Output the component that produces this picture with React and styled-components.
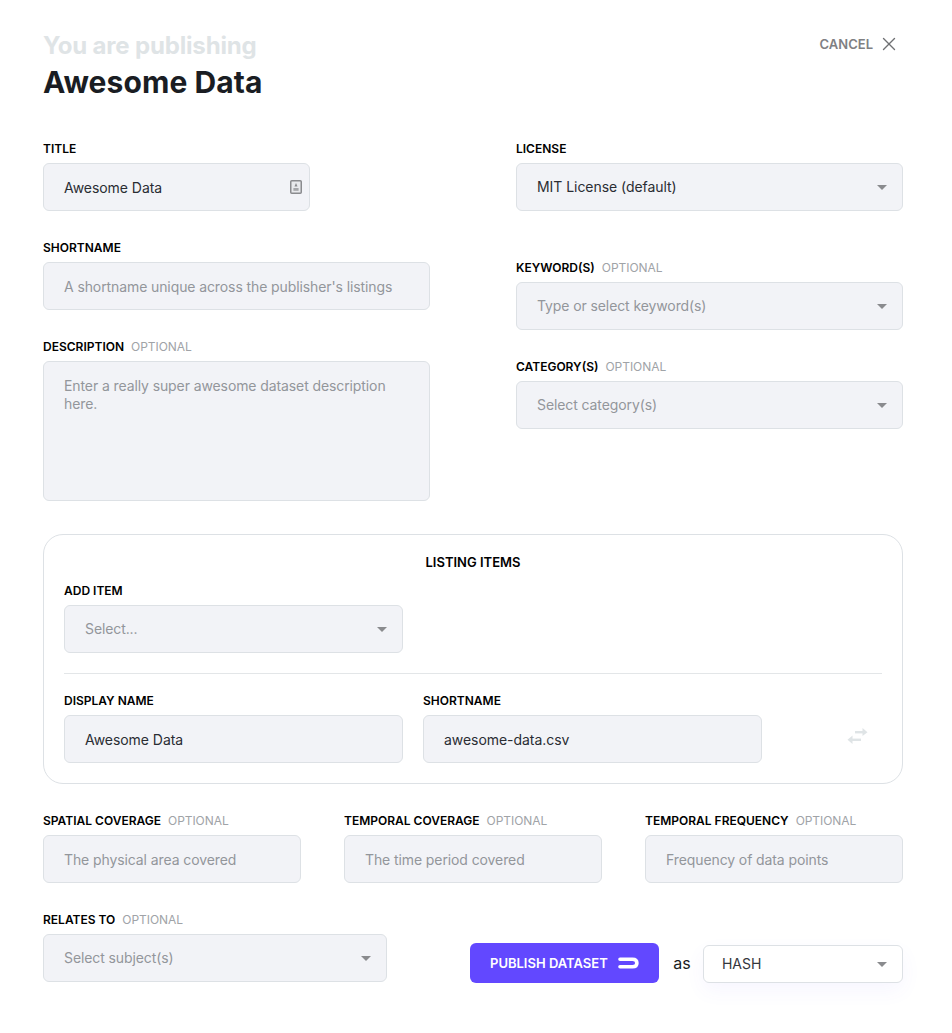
import React from 'react'
import styled, { createGlobalStyle } from 'styled-components'
import { X } from 'lucide-react'

const GlobalStyle = createGlobalStyle`
  * {
    box-sizing: border-box;
  }
  html, body {
    margin: 0;
    background: #fff;
  }
  body {
    font-family: Inter, 'Liberation Sans', sans-serif;
    color: #1a1d23;
  }
`
const Page = styled.div`
  width: 952px;
  height: 1033px;
  padding: 31px 49px 0 43px;
`
const Header = styled.header`
  display: flex;
  justify-content: space-between;
  align-items: flex-start;
  height: 110px;
`
const Titles = styled.div`
  display: flex;
  flex-direction: column;
`
const Overline = styled.div`
  font-size: 24px;
  line-height: 29px;
  font-weight: 700;
  letter-spacing: -0.17px;
  color: #dfe4e6;
`
const Heading = styled.h1`
  margin: 4px 0 0;
  font-size: 30px;
  line-height: 36px;
  font-weight: 700;
  letter-spacing: 0.08px;
  color: #1a1d23;
`
const Cancel = styled.div`
  display: flex;
  align-items: center;
  gap: 5px;
  margin: 2px 3px 0 0;
  font-size: 13px;
  line-height: 22px;
  font-weight: 600;
  color: #7f8083;
`
const Columns = styled.div`
  display: grid;
  grid-template-columns: 387px 387px;
  column-gap: 86px;
  height: 393px;
`
const Column = styled.div`
  display: flex;
  flex-direction: column;
  gap: 29px;
`
const Field = styled.div`
  display: flex;
  flex-direction: column;
  width: ${(props) => props.$width || '100%'};
  margin-top: ${(props) => props.$top || 0};
`
const Label = styled.label`
  display: block;
  height: 15px;
  margin-bottom: 7px;
  font-size: 12px;
  line-height: 15px;
  font-weight: 600;
  color: #000;
`
const Optional = styled.span`
  margin-left: 7px;
  font-weight: 400;
  letter-spacing: -0.05px;
  color: #a0a3a7;
`
const Control = styled.div`
  display: flex;
  align-items: ${(props) => (props.$area ? 'flex-start' : 'center')};
  justify-content: space-between;
  height: ${(props) => props.$height || '48px'};
  padding: ${(props) => (props.$area ? '15px 20px' : props.$input ? '2px 15px 0 20px' : '0 15px 0 20px')};
  font-size: 14px;
  line-height: 18px;
  letter-spacing: ${(props) => (props.$filled ? '-0.05px' : '-0.1px')};
  color: ${(props) => (props.$filled ? '#2a2d33' : '#93969b')};
  background: #f2f3f7;
  border: 1px solid #dde1e5;
  border-radius: 6px;
`
const Caret = styled.span`
  flex: none;
  width: 0;
  height: 0;
  border-left: 5px solid transparent;
  border-right: 5px solid transparent;
  border-top: 5px solid #8a8b8e;
`
const TitleIcon = styled.svg`
  flex: none;
  margin: -2px -8px 0 0;
`
const ListingBox = styled.section`
  width: 860px;
  height: 250px;
  padding: 20px;
  border: 1px solid #dde1e5;
  border-radius: 20px;
`
const BoxTitle = styled.div`
  margin: 0 0 13px;
  font-size: 13px;
  line-height: 15px;
  font-weight: 600;
  text-align: center;
  color: #000;
`
const Divider = styled.hr`
  height: 1px;
  margin: 20px 0 19px;
  background: #e3e6e8;
  border: 0;
`
const ItemRow = styled.div`
  display: grid;
  grid-template-columns: 339px 339px 1fr;
  column-gap: 20px;
`
const SwapCell = styled.div`
  display: flex;
  justify-content: center;
  align-items: center;
  padding: 16px 0 0 51px;
`
const Coverage = styled.div`
  display: grid;
  grid-template-columns: repeat(3, 258px);
  column-gap: 43px;
  margin-top: 29px;
`
const BottomRow = styled.div`
  display: flex;
  align-items: flex-end;
  margin-top: 29px;
`
const PublishGroup = styled.div`
  display: flex;
  align-items: flex-start;
  margin-left: 83px;
  margin-bottom: -2px;
`
const PublishButton = styled.button`
  display: flex;
  align-items: center;
  gap: 10px;
  width: 189px;
  height: 40px;
  padding: 0 20px;
  font-family: inherit;
  font-size: 13px;
  font-weight: 600;
  color: #fff;
  background: #6248ff;
  border: 0;
  border-radius: 6px;
`
const As = styled.span`
  width: 44px;
  padding-left: 2px;
  font-size: 16px;
  line-height: 41px;
  text-align: center;
  color: #1a1d23;
`
const HashSelect = styled(Control)`
  width: 200px;
  height: 38px;
  margin-top: 2px;
  padding-left: 18px;
  color: #34373c;
  background: #fff;
  box-shadow: 0 8px 20px rgba(98, 72, 255, 0.05);
`

function BadgeIcon() {
  return (
    <TitleIcon width='12' height='14' viewBox='0 0 12 14' fill='none'>
      <rect x='0.75' y='0.75' width='10.5' height='12.5' rx='1' fill='#e8e9ec' stroke='#8a8b8e' strokeWidth='1.5' />
      <path d='M6 3 L7.5 6.6 H4.5 Z' fill='#8a8b8e' />
      <rect x='3.4' y='8' width='5.2' height='2.8' fill='#a5a6a9' />
    </TitleIcon>
  )
}

function SwapIcon() {
  return (
    <svg width='21' height='17' viewBox='0 0 21 17' fill='#dfe4e6'>
      <rect x='8' y='3' width='9' height='2.4' />
      <path d='M15.5 0 L20.5 4.2 L15.5 8 Z' />
      <rect x='4' y='10.6' width='10' height='2.4' />
      <path d='M5.5 7.6 L0.5 11.8 L5.5 16 Z' />
    </svg>
  )
}

function HashLogo() {
  return (
    <svg width='21' height='12' viewBox='0 0 21 12' fill='none'>
      <path
        d='M2 2.2 H14.5 C17.6 2.2 18.9 4 18.9 6 C18.9 8 17.6 9.8 14.5 9.8 H2'
        stroke='#fff'
        strokeWidth='3.6'
        strokeLinecap='round'
      />
    </svg>
  )
}

function SelectControl({ children, filled, ...rest }) {
  return (
    <Control $filled={filled} {...rest}>
      {children}
      <Caret />
    </Control>
  )
}

function LabelText({ children, optional }) {
  return (
    <Label>
      {children}
      {optional && <Optional>OPTIONAL</Optional>}
    </Label>
  )
}

export default function App() {
  return (
    <Page>
      <GlobalStyle />
      <Header>
        <Titles>
          <Overline>You are publishing</Overline>
          <Heading>Awesome Data</Heading>
        </Titles>
        <Cancel>
          CANCEL
          <X size={22} strokeWidth={1.5} color='#6f7073' />
        </Cancel>
      </Header>

      <Columns>
        <Column>
          <Field $width='267px'>
            <LabelText>TITLE</LabelText>
            <Control $filled $input>
              Awesome Data
              <BadgeIcon />
            </Control>
          </Field>
          <Field>
            <LabelText>SHORTNAME</LabelText>
            <Control $input>A shortname unique across the publisher's listings</Control>
          </Field>
          <Field>
            <LabelText optional>DESCRIPTION</LabelText>
            <Control $area $height='140px'>
              Enter a really super awesome dataset description here.
            </Control>
          </Field>
        </Column>
        <Column>
          <Field>
            <LabelText>LICENSE</LabelText>
            <SelectControl filled>MIT License (default)</SelectControl>
          </Field>
          <Field $top='20px'>
            <LabelText optional>KEYWORD(S)</LabelText>
            <SelectControl>Type or select keyword(s)</SelectControl>
          </Field>
          <Field>
            <LabelText optional>CATEGORY(S)</LabelText>
            <SelectControl>Select category(s)</SelectControl>
          </Field>
        </Column>
      </Columns>

      <ListingBox>
        <BoxTitle>LISTING ITEMS</BoxTitle>
        <Field $width='339px'>
          <LabelText>ADD ITEM</LabelText>
          <SelectControl>Select...</SelectControl>
        </Field>
        <Divider />
        <ItemRow>
          <Field>
            <LabelText>DISPLAY NAME</LabelText>
            <Control $filled $input>Awesome Data</Control>
          </Field>
          <Field>
            <LabelText>SHORTNAME</LabelText>
            <Control $filled $input>awesome-data.csv</Control>
          </Field>
          <SwapCell>
            <SwapIcon />
          </SwapCell>
        </ItemRow>
      </ListingBox>

      <Coverage>
        <Field>
          <LabelText optional>SPATIAL COVERAGE</LabelText>
          <Control $input>The physical area covered</Control>
        </Field>
        <Field>
          <LabelText optional>TEMPORAL COVERAGE</LabelText>
          <Control $input>The time period covered</Control>
        </Field>
        <Field>
          <LabelText optional>TEMPORAL FREQUENCY</LabelText>
          <Control $input>Frequency of data points</Control>
        </Field>
      </Coverage>

      <BottomRow>
        <Field $width='344px'>
          <LabelText optional>RELATES TO</LabelText>
          <SelectControl>Select subject(s)</SelectControl>
        </Field>
        <PublishGroup>
          <PublishButton>
            PUBLISH DATASET
            <HashLogo />
          </PublishButton>
          <As>as</As>
          <HashSelect $filled>
            HASH
            <Caret />
          </HashSelect>
        </PublishGroup>
      </BottomRow>
    </Page>
  )
}
